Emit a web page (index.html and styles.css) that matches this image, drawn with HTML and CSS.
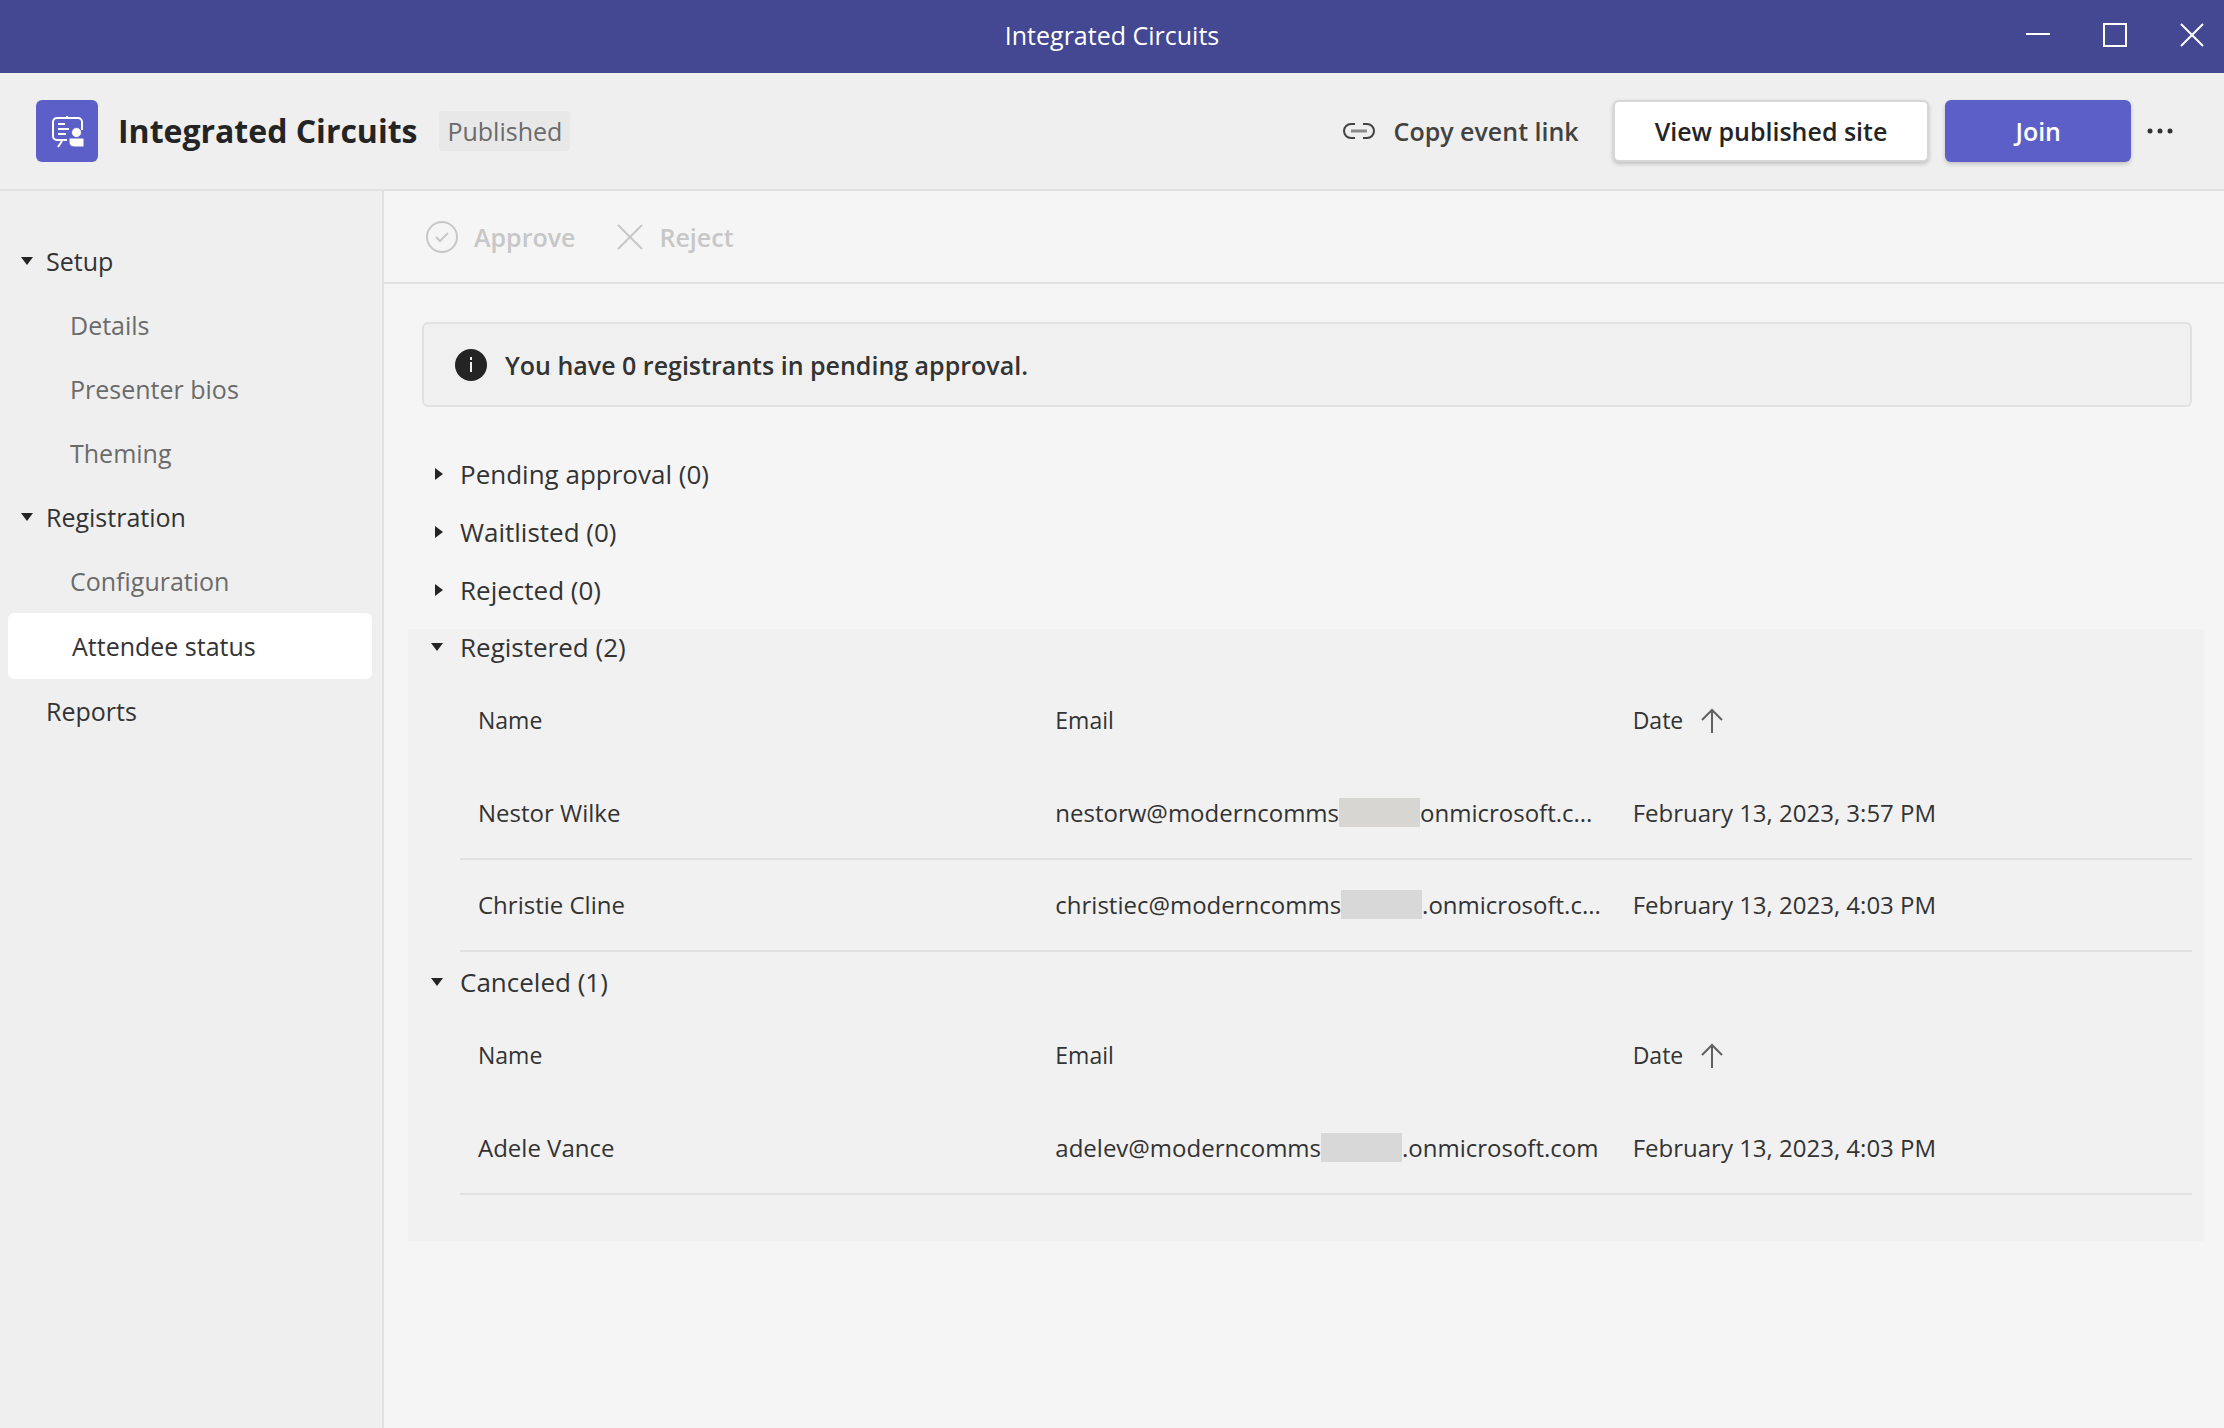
FILE: index.html
```html
<!DOCTYPE html>
<html lang="en">
<head>
  <meta charset="UTF-8">
  <title>Integrated Circuits</title>
  <link rel="stylesheet" href="styles.css">
</head>
<body>

<div class="titlebar">
  <span class="titlebar-text">Integrated Circuits</span>
  <div class="window-controls">
    <button aria-label="Minimize"><svg width="24" height="24" viewBox="0 0 24 24"><path d="M0 11h24"/></svg></button>
    <button aria-label="Maximize"><svg width="24" height="24" viewBox="0 0 24 24"><rect x="1" y="1" width="22" height="22"/></svg></button>
    <button aria-label="Close"><svg width="24" height="24" viewBox="0 0 24 24"><path d="M1 1l22 22M23 1L1 23"/></svg></button>
  </div>
</div>

<header class="event-header">
  <div class="event-icon">
    <svg width="34" height="36" viewBox="0 0 34 36">
      <path d="M17 3v3M12 28l-4 6M17 27H7a4 4 0 0 1-4-4V9a4 4 0 0 1 4-4h21a4 4 0 0 1 4 4v8M8 11h7M8 16h11M8 21h8"/>
      <circle cx="26.500" cy="19.500" r="5"/>
      <path class="solid" d="M19 25h15v9H24a5 5 0 0 1-5-5z"/>
    </svg>
  </div>
  <h1>Integrated Circuits</h1>
  <span class="badge">Published</span>
  <div class="header-actions">
    <button class="btn-link">
      <svg width="34" height="18" viewBox="0 0 34 18"><path d="M13 2H9a7 7 0 0 0 0 14h4M21 2h4a7 7 0 0 1 0 14h-4"/><path class="bar" d="M9 9h16"/></svg>
      Copy event link
    </button>
    <button class="btn btn-site">View published site</button>
    <button class="btn btn-join">Join</button>
    <button class="btn-more" aria-label="More options">
      <svg width="26" height="6" viewBox="0 0 26 6"><circle cx="3" cy="3" r="2.500"/><circle cx="13" cy="3" r="2.500"/><circle cx="23" cy="3" r="2.500"/></svg>
    </button>
  </div>
</header>

<div class="layout">
  <nav class="sidebar">
    <button class="nav-group"><svg class="caret" width="14" height="10" viewBox="0 0 14 10"><path d="M1 1h12L7 9z"/></svg>Setup</button>
    <a class="nav-item" href="#">Details</a>
    <a class="nav-item" href="#">Presenter bios</a>
    <a class="nav-item" href="#">Theming</a>
    <button class="nav-group"><svg class="caret" width="14" height="10" viewBox="0 0 14 10"><path d="M1 1h12L7 9z"/></svg>Registration</button>
    <a class="nav-item" href="#">Configuration</a>
    <a class="nav-item active" href="#">Attendee status</a>
    <a class="nav-item nav-top" href="#">Reports</a>
  </nav>

  <main>
    <div class="toolbar">
      <button disabled>
        <svg width="32" height="32" viewBox="0 0 32 32"><circle cx="16" cy="16" r="15"/><path d="M10 16l4 4 8-8"/></svg>
        Approve
      </button>
      <button disabled>
        <svg width="26" height="26" viewBox="0 0 26 26"><path d="M1 1l24 24M25 1L1 25"/></svg>
        Reject
      </button>
    </div>

    <div class="content">
      <div class="info-banner">
        <svg width="32" height="32" viewBox="0 0 32 32"><circle cx="16" cy="16" r="16"/><path d="M16 13v10"/><path d="M16 8v3"/></svg>
        You have 0 registrants in pending approval.
      </div>

      <button class="section-toggle"><svg class="caret" width="10" height="14" viewBox="0 0 10 14"><path d="M1 1v12l8-6z"/></svg>Pending approval (0)</button>
      <button class="section-toggle"><svg class="caret" width="10" height="14" viewBox="0 0 10 14"><path d="M1 1v12l8-6z"/></svg>Waitlisted (0)</button>
      <button class="section-toggle"><svg class="caret" width="10" height="14" viewBox="0 0 10 14"><path d="M1 1v12l8-6z"/></svg>Rejected (0)</button>

      <div class="expanded">
        <button class="section-toggle open"><svg class="caret" width="14" height="10" viewBox="0 0 14 10"><path d="M1 1h12L7 9z"/></svg>Registered (2)</button>
        <table>
          <thead>
            <tr>
              <th>Name</th>
              <th>Email</th>
              <th>Date <svg class="sort" width="22" height="26" viewBox="0 0 22 26"><path d="M11 25V2M1 12L11 2l10 10"/></svg></th>
            </tr>
          </thead>
          <tbody>
            <tr>
              <td>Nestor Wilke</td>
              <td>nestorw@moderncomms<span class="redacted warm"></span>onmicrosoft.c...</td>
              <td>February 13, 2023, 3:57 PM</td>
            </tr>
            <tr>
              <td>Christie Cline</td>
              <td>christiec@moderncomms<span class="redacted"></span>.onmicrosoft.c...</td>
              <td>February 13, 2023, 4:03 PM</td>
            </tr>
          </tbody>
        </table>

        <button class="section-toggle open"><svg class="caret" width="14" height="10" viewBox="0 0 14 10"><path d="M1 1h12L7 9z"/></svg>Canceled (1)</button>
        <table>
          <thead>
            <tr>
              <th>Name</th>
              <th>Email</th>
              <th>Date <svg class="sort" width="22" height="26" viewBox="0 0 22 26"><path d="M11 25V2M1 12L11 2l10 10"/></svg></th>
            </tr>
          </thead>
          <tbody>
            <tr>
              <td>Adele Vance</td>
              <td>adelev@moderncomms<span class="redacted"></span>.onmicrosoft.com</td>
              <td>February 13, 2023, 4:03 PM</td>
            </tr>
          </tbody>
        </table>
      </div>
    </div>
  </main>
</div>

</body>
</html>
```

FILE: styles.css
```css
* {
  box-sizing: border-box;
}

body {
  margin: 0;
  min-height: 100vh;
  display: flex;
  flex-direction: column;
  font-family: "Open Sans", "Noto Sans", sans-serif;
  font-size: 25px;
  line-height: 36px;
  color: #333;
  background-color: #f5f5f5;
}

button {
  font: inherit;
  color: inherit;
  background: none;
  border: none;
  padding: 0;
  cursor: pointer;
}

svg {
  flex-shrink: 0;
  fill: none;
  stroke: currentColor;
  stroke-width: 2;
}

.titlebar {
  display: grid;
  grid-template-columns: 1fr auto 1fr;
  align-items: center;
  height: 73px;
  padding: 0 20px 4px;
  color: #fff;
  background-color: #444791;
}

.titlebar-text {
  grid-column: 2;
}

.window-controls {
  display: flex;
  justify-content: flex-end;
  gap: 53px;
}

.window-controls button {
  display: flex;
}

.event-header {
  display: flex;
  align-items: center;
  height: 118px;
  padding: 0 51px 0 36px;
  background-color: #efefef;
  border-bottom: 2px solid #e1e1e1;
}

.event-icon {
  display: flex;
  align-items: center;
  justify-content: center;
  width: 62px;
  height: 62px;
  margin-right: 20px;
  border-radius: 6px;
  color: #fff;
  background-color: #5b5fc7;
}

.event-icon circle,
.event-icon .solid {
  fill: #fff;
  stroke: #5b5fc7;
  stroke-width: 1;
}

h1 {
  margin: 0 22px 0 0;
  font-size: 32px;
  line-height: 44px;
  font-weight: 700;
  color: #242424;
}

.badge {
  padding: 2px 8px;
  border-radius: 4px;
  color: #6b6b6b;
  background-color: #e8e8e8;
}

.header-actions {
  display: flex;
  align-items: center;
  gap: 16px;
  margin-left: auto;
  font-weight: 600;
}

.btn-link {
  display: flex;
  align-items: center;
  gap: 18px;
  margin-right: 18px;
  color: #424242;
}

.btn-link .bar {
  stroke: #8a8a8a;
  stroke-width: 3;
}

.btn {
  height: 62px;
  padding: 0 40px;
  border-radius: 6px;
  box-shadow: 0 2px 4px rgba(0, 0, 0, 0.2);
}

.btn-site {
  color: #242424;
  background-color: #fff;
  border: 2px solid #d6d6d6;
}

.btn-join {
  padding: 0 70px;
  color: #fff;
  background-color: #5b5fc7;
}

.btn-more {
  display: flex;
}

.btn-more svg {
  fill: #333;
  stroke: none;
}

.layout {
  flex: 1;
  display: flex;
}

.sidebar {
  flex: 0 0 384px;
  display: flex;
  flex-direction: column;
  padding: 38px 8px;
  background-color: #efefef;
  border-right: 2px solid #e1e1e1;
}

.nav-group {
  display: flex;
  align-items: center;
  gap: 12px;
  height: 64px;
  padding-left: 12px;
}

.caret {
  fill: #242424;
  stroke: none;
}

.nav-item {
  padding: 14px 0 14px 62px;
  border-radius: 6px;
  color: #6b6b6b;
  text-decoration: none;
}

.nav-item.active {
  margin-right: 2px;
  padding: 15px 0 15px 64px;
  color: #333;
  background-color: #fff;
}

.nav-item.nav-top {
  padding-left: 38px;
  color: #333;
}

main {
  flex: 1;
  min-width: 0;
}

.toolbar {
  display: flex;
  gap: 42px;
  height: 93px;
  padding: 0 42px;
  border-bottom: 2px solid #e1e1e1;
}

.toolbar button {
  display: flex;
  align-items: center;
  gap: 16px;
  font-weight: 600;
  color: #c7c7c7;
}

.content {
  padding: 38px 20px 0 24px;
}

.info-banner {
  display: flex;
  align-items: center;
  gap: 18px;
  height: 85px;
  margin: 0 12px 38px 14px;
  padding: 0 31px;
  font-weight: 600;
  background-color: #f0f0f0;
  border: 2px solid #e1e1e1;
  border-radius: 6px;
}

.info-banner circle {
  fill: #242424;
  stroke: none;
}

.info-banner path {
  stroke: #f0f0f0;
}

.section-toggle {
  display: flex;
  align-items: center;
  gap: 16px;
  height: 58px;
  padding-left: 26px;
  font-size: 26px;
}

.section-toggle.open {
  height: 36px;
  padding-left: 22px;
}

.expanded {
  margin-top: 10px;
  padding-bottom: 34px;
  background-color: #f1f1f1;
}

table {
  width: calc(100% - 64px);
  margin: 0 12px 12px 52px;
  table-layout: fixed;
  border-collapse: collapse;
  font-size: 24px;
}

th {
  height: 102px;
  padding: 8px 18px 0;
  text-align: left;
  font-size: 23px;
  font-weight: 400;
}

th,
td {
  white-space: nowrap;
}

td {
  height: 92px;
  padding: 0 18px;
  border-bottom: 2px solid #e1e1e1;
}

.sort {
  margin-left: 12px;
  vertical-align: -5px;
  color: #616161;
}

.redacted {
  display: inline-block;
  width: 81px;
  height: 29px;
  vertical-align: -5px;
  background-color: #d9d8d8;
}

.redacted.warm {
  background-color: #d8d6d3;
}
```
